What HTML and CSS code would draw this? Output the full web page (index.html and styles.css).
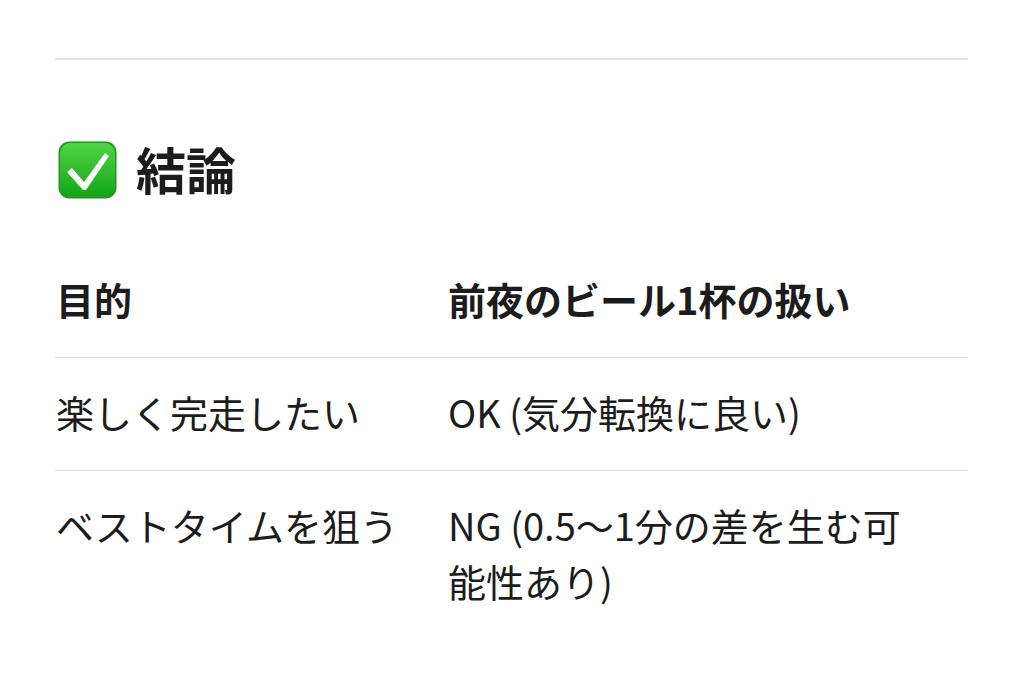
FILE: index.html
```html
<!DOCTYPE html>
<html lang="ja">
<head>
<meta charset="utf-8">
<link rel="stylesheet" href="styles.css">
</head>
<body>
<div class="page">
  <hr class="rule">
  <h2 class="heading">
    <svg class="emoji" viewBox="0 0 59 58" width="59" height="58" aria-hidden="true">
      <defs>
        <linearGradient id="g" x1="0" y1="0" x2="0" y2="1">
          <stop offset="0" stop-color="#4fd444"/>
          <stop offset="1" stop-color="#14a514"/>
        </linearGradient>
      </defs>
      <rect x="0.5" y="0.5" width="58" height="57" rx="11" fill="#1d9a1d"/>
      <rect x="2" y="2" width="55" height="54" rx="10" fill="url(#g)"/>
      <polygon points="9,31 14,27 26,41 47,12 51,15 28,49 25,49" fill="#ffffff"/>
    </svg>
    <span class="heading-text">結論</span>
  </h2>
  <table class="tbl">
    <thead>
      <tr><th class="c1">目的</th><th>前夜のビール1杯の扱い</th></tr>
    </thead>
    <tbody>
      <tr><td class="c1">楽しく完走したい</td><td>OK (気分転換に良い)</td></tr>
      <tr><td class="c1">ベストタイムを狙う</td><td>NG (0.5～1分の差を生む可能性あり)</td></tr>
    </tbody>
  </table>
</div>
</body>
</html>
```

FILE: styles.css
```css
html, body {
  margin: 0;
  padding: 0;
  background: #ffffff;
}
body {
  font-family: "Noto Sans CJK JP", "Noto Sans", sans-serif;
  color: #1c1c1c;
}
.page {
  padding: 58px 56px 0 55px;
}
.rule {
  border: none;
  height: 2px;
  background: #e6e6e6;
  margin: 0;
}
.heading {
  display: flex;
  align-items: center;
  gap: 19px;
  margin: 80px 0 0 3px;
  height: 60px;
  font-size: 50px;
  font-weight: 700;
  line-height: 60px;
}
.heading-text {
  margin-bottom: 4px;
}
.emoji {
  display: block;
  flex: none;
}
.tbl {
  margin-top: 45px;
  width: 100%;
  border-collapse: collapse;
  font-size: 38px;
  line-height: 56px;
}
.tbl th, .tbl td {
  text-align: left;
  vertical-align: top;
  padding: 26px 40px 30px 1px;
}
.tbl th {
  font-weight: 700;
}
.tbl .c1 {
  width: 351px;
}
.tbl thead tr, .tbl tbody tr:first-child {
  border-bottom: 1px solid #dedede;
}
```
